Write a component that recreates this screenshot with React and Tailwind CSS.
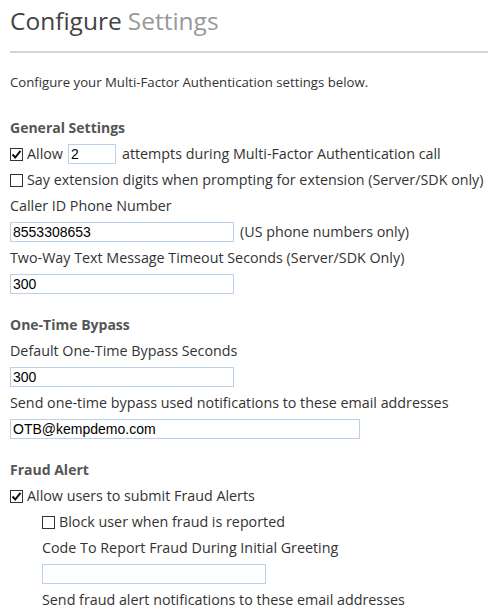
import React from "react";

const sans = { fontFamily: '"Open Sans", "Noto Sans", sans-serif' };

function Check({ checked }) {
  return (
    <span className="inline-flex items-center justify-center w-[13px] h-[13px] border border-[#333] bg-white shrink-0">
      {checked && (
        <svg width="11" height="11" viewBox="0 0 11 11">
          <path d="M1.5 5.5 L4.2 8.5 L9.5 1.8" fill="none" stroke="#111" strokeWidth="2" />
        </svg>
      )}
    </span>
  );
}

function Input({ value = "", w }) {
  return (
    <div
      className={`h-[20px] border border-[#b9d1ea] bg-white flex items-center px-[2px] text-[14px] text-black font-['Liberation_Sans',Arial,sans-serif] ${w}`}
    >
      {value}
    </div>
  );
}

const Row = ({ children, cls = "" }) => (
  <div className={`h-[26px] flex items-center text-[14.3px] text-[#333] whitespace-nowrap ${cls}`}>{children}</div>
);

const Heading = ({ children, cls = "" }) => (
  <div className={`h-[28px] flex items-center text-[14px] font-bold text-[#555] ${cls}`}>{children}</div>
);

export default function App() {
  return (
    <div className="w-[488px] h-[612px] bg-white overflow-hidden pl-[10px]" style={sans}>
      <div className="h-[42px] flex items-center text-[24.5px] text-[#444] leading-none">
        Configure<span className="text-[#999] ml-[6px]">Settings</span>
      </div>
      <div className="mt-[9px] border-t-2 border-[#d4d4d4]" />
      <div className="h-[60px] flex items-center text-[13.2px] text-[#333]">
        Configure your Multi-Factor Authentication settings below.
      </div>
      <Heading>General Settings</Heading>
      <Row>
        <Check checked />
        <span className="ml-[4px]">Allow</span>
        <div className="ml-[5px]">
          <Input value="2" w="w-[48px]" />
        </div>
        <span className="ml-[6px]">attempts during Multi-Factor Authentication call</span>
      </Row>
      <Row>
        <Check />
        <span className="ml-[4px]">Say extension digits when prompting for extension (Server/SDK only)</span>
      </Row>
      <Row>Caller ID Phone Number</Row>
      <Row>
        <Input value="8553308653" w="w-[224px]" />
        <span className="ml-[6px]">(US phone numbers only)</span>
      </Row>
      <Row>Two-Way Text Message Timeout Seconds (Server/SDK Only)</Row>
      <Row>
        <Input value="300" w="w-[224px]" />
      </Row>
      <Heading cls="mt-[13px]">One-Time Bypass</Heading>
      <Row>Default One-Time Bypass Seconds</Row>
      <Row>
        <Input value="300" w="w-[224px]" />
      </Row>
      <Row>Send one-time bypass used notifications to these email addresses</Row>
      <Row>
        <Input value="OTB@kempdemo.com" w="w-[350px]" />
      </Row>
      <Heading cls="mt-[13px]">Fraud Alert</Heading>
      <Row>
        <Check checked />
        <span className="ml-[4px]">Allow users to submit Fraud Alerts</span>
      </Row>
      <div className="pl-[32px]">
        <Row>
          <Check />
          <span className="ml-[4px]">Block user when fraud is reported</span>
        </Row>
        <Row>Code To Report Fraud During Initial Greeting</Row>
        <Row>
          <Input w="w-[224px]" />
        </Row>
        <Row>Send fraud alert notifications to these email addresses</Row>
      </div>
    </div>
  );
}
